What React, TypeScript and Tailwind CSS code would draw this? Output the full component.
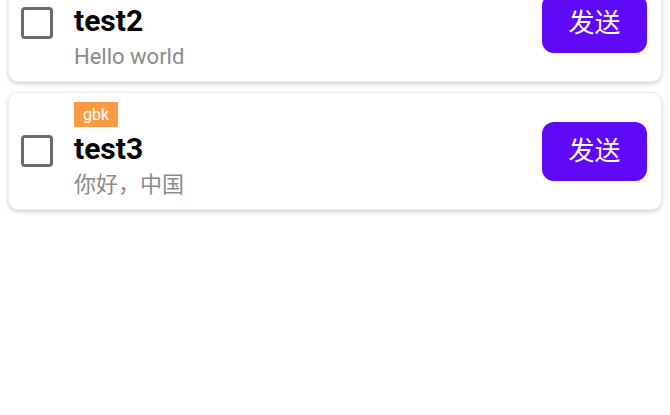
import React from 'react';

type Msg = { tag: string; title: string; text: string };

const items: Msg[] = [
  { tag: 'utf8', title: 'test1', text: 'Hi there' },
  { tag: 'utf8', title: 'test2', text: 'Hello world' },
  { tag: 'gbk', title: 'test3', text: '你好，中国' },
];

function Row({ m }: { m: Msg }) {
  return (
    <div className="flex items-center rounded-[10px] border border-[#eeeeee] bg-white pl-[12px] pr-[14px] shadow-[0_2px_4px_rgba(0,0,0,0.18)]">
      {/* checkbox */}
      <div className="h-[32px] w-[32px] shrink-0 rounded-[4px] border-[3px] border-[#6b6b6b]" />

      <div className="ml-[21px] flex min-w-0 flex-1 flex-col items-start pt-[9px] pb-[10px]">
        <span className="h-[25px] bg-[#f99b44] px-[9px] text-[16px] leading-[25px] text-white">{m.tag}</span>
        <div className="mt-[4px] text-[30px] font-bold leading-[36px] text-black">{m.title}</div>
        <div className="mt-[4px] text-[22px] leading-[28px] text-[#8a8a8a]">{m.text}</div>
      </div>

      <button className="h-[59px] w-[105px] shrink-0 rounded-[12px] bg-[#5e0af6] text-[26px] text-white">
        发送
      </button>
    </div>
  );
}

export default function App() {
  return (
    <div
      className="h-[415px] w-full overflow-hidden bg-white"
      style={{ fontFamily: 'Roboto, "Noto Sans CJK SC", sans-serif' }}
    >
      {/* list scrolled so the first card is out of view */}
      <div className="-mt-[164px] flex flex-col gap-[10px] px-[8px]">
        {items.map((m) => (
          <Row key={m.title} m={m} />
        ))}
      </div>
    </div>
  );
}
